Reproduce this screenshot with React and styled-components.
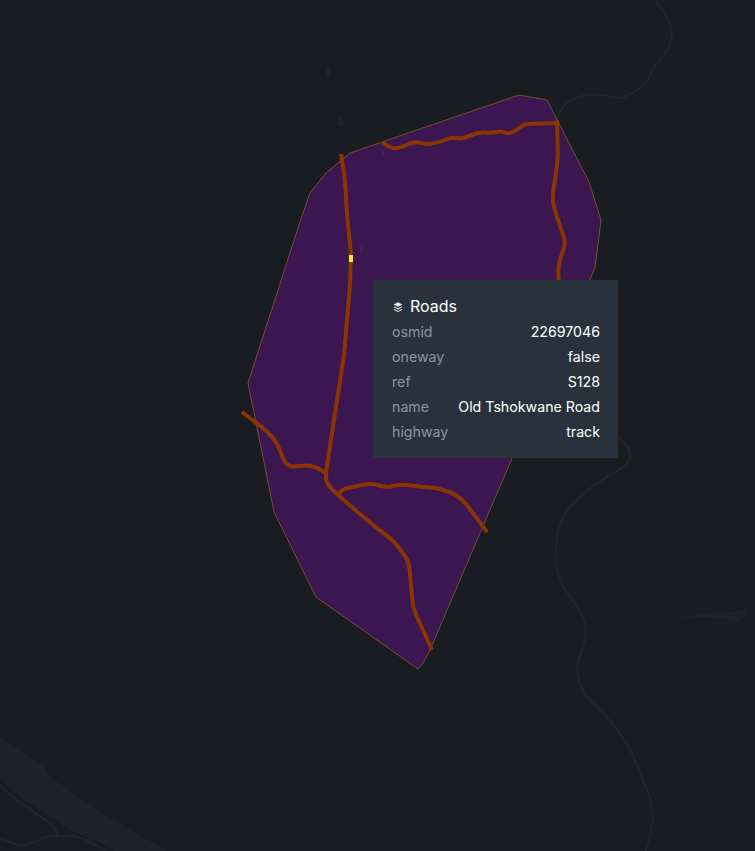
import styled, { createGlobalStyle } from 'styled-components';

const GlobalStyle = createGlobalStyle`
  html, body {
    margin: 0;
    padding: 0;
    background: #191d21;
  }
`;

const tooltipRows = [
  ['osmid', '22697046'],
  ['oneway', 'false'],
  ['ref', 'S128'],
  ['name', 'Old Tshokwane Road'],
  ['highway', 'track'],
];

const boundary =
  '519,95 547,100 589,182 601,220 595,268 510,463 430,650 423,663 418,669 316,597 274,512 248,383 300,222 310,193 326,173 350,153';

const roads = [
  [[341, 154], [345, 180], [347, 215], [351, 253], [350, 285], [344, 355], [326, 472], [326, 483], [338, 495], [373, 525], [395, 542], [409, 562], [413, 608], [432, 650]],
  [[383, 142], [388, 147], [397, 149], [416, 141], [426, 145], [443, 141], [452, 137], [463, 139], [478, 132], [492, 133], [501, 131], [508, 134], [517, 130], [524, 124], [557, 123]],
  [[557, 120], [558, 158], [552, 200], [558, 220], [566, 243], [558, 265], [559, 285]],
  [[242, 412], [267, 431], [278, 444], [282, 457], [288, 467], [312, 465], [326, 473]],
  [[338, 496], [342, 489], [372, 483], [387, 488], [400, 484], [423, 487], [438, 488], [457, 495], [467, 505], [487, 532]],
];

const baseLines = [
  [[655, 0], [668, 18], [673, 35], [668, 50], [653, 68], [646, 84], [633, 93], [620, 99], [598, 94], [582, 95], [565, 103], [557, 118]],
  [[618, 435], [631, 452], [629, 463], [590, 488], [569, 507], [558, 528], [555, 553], [557, 570], [563, 587], [582, 613], [586, 628], [585, 641], [577, 663], [577, 675], [583, 693], [610, 720], [628, 745], [638, 767], [652, 803], [653, 823], [646, 851]],
  [[0, 785], [10, 795], [55, 827], [57, 836]],
  [[0, 839], [23, 847], [47, 836], [78, 836], [107, 851]],
];

const baseShapes = [
  '0,737 43,765 50,777 107,816 167,851 115,851 67,828 20,797 0,778',
  '676,619 702,613 733,612 747,608 747,616 738,623 733,620 703,617',
  '339,117 343,118 344,124 341,128 338,125',
  '326,68 330,66 331,74 328,79 326,75',
];

const inPolygonShapes = ['381,149 385,151 383,157', '360,247 362,244 363,252 361,255'];

// rounds the corners of a traced line by a small radius, ends stay put
const smoothPath = (points, radius = 8) => {
  let d = `M${points[0][0]} ${points[0][1]}`;
  for (let i = 1; i < points.length - 1; i++) {
    const [x, y] = points[i];
    const [px, py] = points[i - 1];
    const [nx, ny] = points[i + 1];
    const inLen = Math.hypot(x - px, y - py);
    const outLen = Math.hypot(nx - x, ny - y);
    const a = Math.min(radius, inLen / 2) / inLen;
    const b = Math.min(radius, outLen / 2) / outLen;
    d += ` L${x - (x - px) * a} ${y - (y - py) * a}`;
    d += ` Q${x} ${y} ${x + (nx - x) * b} ${y + (ny - y) * b}`;
  }
  const last = points[points.length - 1];
  return `${d} L${last[0]} ${last[1]}`;
};

const App = () => {
  return (
    <Page>
      <GlobalStyle />
      <MapDrawing viewBox="0 0 755 851">
        {baseShapes.map((points) => (
          <polygon key={points} points={points} fill="#1f2327" />
        ))}
        {baseLines.map((points, i) => (
          <path key={i} d={smoothPath(points)} fill="none" stroke="#212529" strokeWidth="2" />
        ))}
        <polygon points={boundary} fill="#3b1650" stroke="#74502f" strokeWidth="1" />
        {inPolygonShapes.map((points) => (
          <polygon key={points} points={points} fill="#41205a" />
        ))}
        {roads.map((points, i) => (
          <path
            key={i}
            d={smoothPath(points)}
            fill="none"
            stroke="#8a3604"
            strokeWidth="4"
            strokeLinejoin="round"
          />
        ))}
        <rect x="349" y="255" width="4" height="7" fill="#f5f02a" />
      </MapDrawing>
      <Tooltip>
        <TooltipTitle>
          <LayersIcon viewBox="0 0 16 16">
            <path d="M8 1.5 14 4.6 8 7.7 2 4.6Z" fill="#e8e8e8" />
            <path d="M3.4 7.3 2 8.1 8 11.2 14 8.1 12.6 7.3 8 9.7Z" fill="#e8e8e8" />
            <path d="M3.4 10.8 2 11.6 8 14.7 14 11.6 12.6 10.8 8 13.2Z" fill="#e8e8e8" />
          </LayersIcon>
          Roads
        </TooltipTitle>
        {tooltipRows.map(([label, value]) => (
          <Row key={label}>
            <Label>{label}</Label>
            <Value>{value}</Value>
          </Row>
        ))}
      </Tooltip>
    </Page>
  );
};

const Page = styled.div`
  position: relative;
  width: 755px;
  height: 851px;
  overflow: hidden;
  background: #191d21;
  font-family: Inter, sans-serif;
`;

const MapDrawing = styled.svg`
  display: block;
  width: 755px;
  height: 851px;
`;

const Tooltip = styled.div`
  position: absolute;
  left: 373px;
  top: 280px;
  width: 245px;
  height: 178px;
  box-sizing: border-box;
  padding: 16px 18px 0 19px;
  background: #29323c;
`;

const TooltipTitle = styled.div`
  display: flex;
  align-items: center;
  gap: 6px;
  height: 20px;
  margin-bottom: 3.6px;
  font-size: 16px;
  color: #fff;
`;

const LayersIcon = styled.svg`
  width: 12px;
  height: 12px;
  margin-top: 1px;
`;

const Row = styled.div`
  display: flex;
  justify-content: space-between;
  align-items: center;
  height: 24.8px;
  font-size: 14.2px;
`;

const Label = styled.span`
  color: #8d949f;
`;

const Value = styled.span`
  color: #fff;
`;

export default App;
